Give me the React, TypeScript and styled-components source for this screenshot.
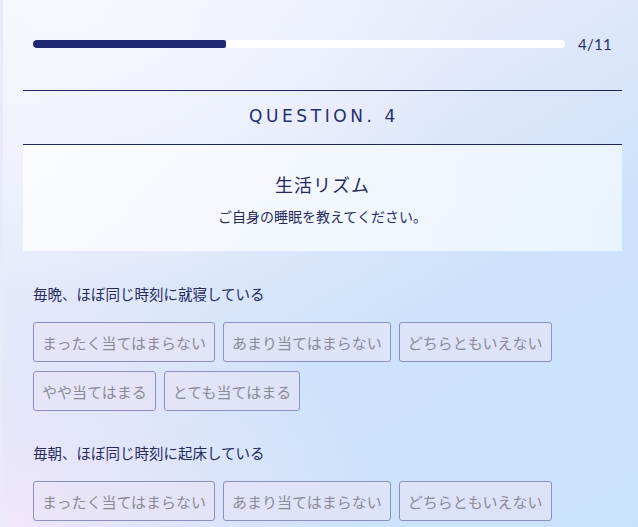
import React from "react";
import styled, { createGlobalStyle } from "styled-components";

const Global = createGlobalStyle`
  html, body { margin: 0; padding: 0; }
  body {
    width: 638px;
    height: 527px;
    overflow: hidden;
    font-family: "Noto Sans CJK JP", "Noto Sans", sans-serif;
    background: #e9e9f9;
  }
`;

const Page = styled.div`
  margin-left: 3px;
  height: 527px;
  overflow: hidden;
  box-sizing: border-box;
  padding: 0 16px 0 20px;
  background:
    radial-gradient(ellipse 380px 260px at 0% 100%, #f0e6fb 0%, rgba(240,230,251,0) 100%),
    radial-gradient(ellipse 420px 300px at 10% 0%, #f6f8fe 0%, rgba(246,248,254,0) 100%),
    linear-gradient(150deg, #f1f3fd 0%, #e3e8fb 35%, #cde3fb 62%, #c9e2fb 100%);
`;

const ProgressRow = styled.div`
  display: flex;
  align-items: center;
  gap: 13px;
  padding: 36px 10px 0 10px;
  height: 16px;
`;

const Track = styled.div`
  flex: 1;
  height: 8px;
  background: #ffffff;
  border-radius: 4px;
  overflow: hidden;
`;

const Fill = styled.div`
  height: 100%;
  background: #1f2872;
  border-radius: 2px;
`;

const Count = styled.span`
  font-family: "Lato", "Liberation Sans", sans-serif;
  font-size: 15px;
  color: #2a2f6a;
  letter-spacing: 0.3px;
`;

const Heading = styled.div`
  margin-top: 38px;
  border-top: 1px solid #1e2560;
  border-bottom: 1px solid #1e2560;
  height: 53px;
  display: flex;
  align-items: center;
  justify-content: center;
`;

const QTitle = styled.h2`
  margin: 0 0 3px 3px;
  font-family: "DejaVu Sans", sans-serif;
  font-weight: 400;
  font-size: 17px;
  letter-spacing: 3.6px;
  color: #262d6e;
`;

const Intro = styled.div`
  height: 106px;
  background: linear-gradient(90deg, rgba(252,253,255,0.85), rgba(240,247,254,0.85));
  display: flex;
  flex-direction: column;
  align-items: center;
  padding-top: 26px;
  box-sizing: border-box;
`;

const Theme = styled.div`
  font-size: 18px;
  color: #262b5e;
  letter-spacing: 1px;
  line-height: 26px;
`;

const Lead = styled.div`
  margin-top: 9px;
  font-size: 14px;
  color: #262b5e;
  line-height: 20px;
`;

const Item = styled.div`
  padding: 0 10px;
  margin-top: 33px;
  & + & { margin-top: 32px; }
`;

const Label = styled.div`
  font-size: 14.5px;
  color: #262b5e;
  line-height: 20px;
`;

const Options = styled.div`
  margin-top: 18px;
  display: flex;
  flex-wrap: wrap;
  gap: 9px 8px;
`;

const Option = styled.button`
  height: 40px;
  padding: 0 8px;
  border: 1px solid #8d8fc1;
  border-radius: 3px;
  background: rgba(232, 226, 247, 0.6);
  font-family: "Noto Sans CJK JP", sans-serif;
  font-size: 15px;
  color: #8a8a96;
  cursor: pointer;
`;

const choices = [
  "まったく当てはまらない",
  "あまり当てはまらない",
  "どちらともいえない",
  "やや当てはまる",
  "とても当てはまる",
];

const questions = ["毎晩、ほぼ同じ時刻に就寝している", "毎朝、ほぼ同じ時刻に起床している"];

export default function App() {
  return (
    <>
      <Global />
      <Page>
        <ProgressRow>
          <Track>
            <Fill style={{ width: `${(4 / 11) * 100}%` }} />
          </Track>
          <Count>4/11</Count>
        </ProgressRow>
        <Heading>
          <QTitle>QUESTION. 4</QTitle>
        </Heading>
        <Intro>
          <Theme>生活リズム</Theme>
          <Lead>ご自身の睡眠を教えてください。</Lead>
        </Intro>
        {questions.map((q) => (
          <Item key={q}>
            <Label>{q}</Label>
            <Options>
              {choices.map((c) => (
                <Option key={c}>{c}</Option>
              ))}
            </Options>
          </Item>
        ))}
      </Page>
    </>
  );
}
